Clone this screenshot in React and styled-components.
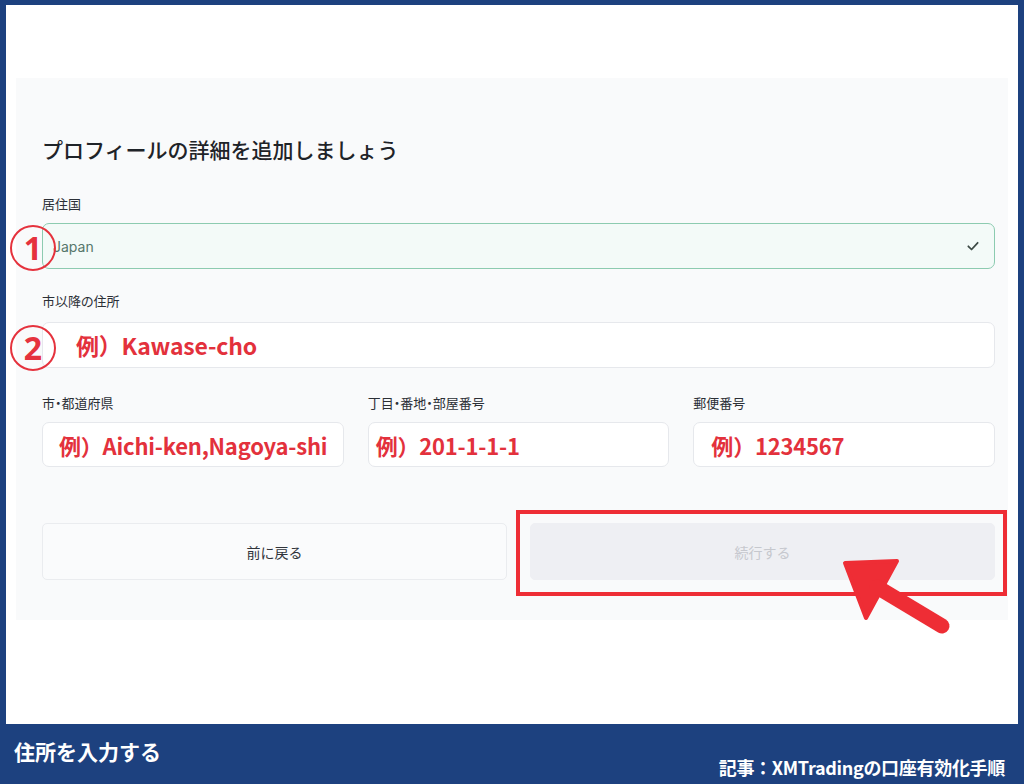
import React from "react";
import styled, { createGlobalStyle } from "styled-components";

const GlobalStyle = createGlobalStyle`
  html, body {
    margin: 0;
    padding: 0;
    background: #ffffff;
    font-family: "Noto Sans CJK JP", "Noto Sans", sans-serif;
  }
`;

// 外枠
const Frame = styled.div`
  width: 1024px;
  height: 784px;
  box-sizing: border-box;
  background: #1d417f;
  padding: 5px 6px 0 6px;
  display: flex;
  flex-direction: column;
`;

const Sheet = styled.div`
  flex: 1;
  background: #ffffff;
  padding: 73px 10px 0 10px;
`;

const Panel = styled.div`
  position: relative;
  height: 542px;
  box-sizing: border-box;
  background: #f9fafb;
  padding: 56px 13px 0 26px;
`;

const Title = styled.h1`
  margin: 0 0 31px 0;
  font-size: 21px;
  line-height: 30px;
  font-weight: 500;
  color: #1f2328;
`;

const Label = styled.div`
  font-size: 13px;
  line-height: 18px;
  color: #2b2f36;
  font-feature-settings: "palt";
  margin-bottom: ${props => props.gap || "10px"};
`;

const Field = styled.div`
  position: relative;
  margin-bottom: ${props => props.after || "0"};
`;

const Input = styled.div`
  height: ${props => props.height || "46px"};
  box-sizing: border-box;
  border-radius: 7px;
  border: 1px solid ${props => (props.ok ? "#8ccbb0" : "#e6e8ec")};
  background: ${props => (props.ok ? "#f3faf8" : "#ffffff")};
  display: flex;
  align-items: center;
  justify-content: space-between;
  padding: 0 14px 0 ${props => props.pad || "14px"};
`;

const InputValue = styled.span`
  font-family: "Inter", "Noto Sans", sans-serif;
  font-size: 14px;
  color: #55766b;
`;

const Example = styled.span`
  font-family: "Noto Sans CJK JP", "Noto Sans", sans-serif;
  font-weight: 700;
  font-size: ${props => props.size || "22px"};
  color: #e3313c;
  white-space: nowrap;
  letter-spacing: -0.2px;
`;

const Grid = styled.div`
  display: grid;
  grid-template-columns: 1fr 1fr 1fr;
  column-gap: 24px;
`;

const ButtonRow = styled.div`
  display: grid;
  grid-template-columns: 1fr 1fr;
  column-gap: 23px;
  margin-top: 56px;
`;

const Button = styled.div`
  height: 57px;
  box-sizing: border-box;
  border-radius: 5px;
  display: flex;
  align-items: center;
  justify-content: center;
  font-size: 14px;
  color: ${props => (props.disabled ? "#c6c8ce" : "#30343b")};
  background: ${props => (props.disabled ? "#eeeff3" : "#fafbfc")};
  border: 1px solid ${props => (props.disabled ? "#eeeff3" : "#eaecef")};
`;

const Marker = styled.div`
  position: absolute;
  left: ${props => props.left};
  top: ${props => props.top};
  width: 46px;
  height: 46px;
  border-radius: 50%;
  border: 2px solid #e5323d;
  box-sizing: border-box;
  display: flex;
  align-items: center;
  justify-content: center;
  color: #e5323d;
  font-weight: 700;
  font-size: 32px;
  line-height: 1;
  font-family: "Noto Sans", sans-serif;
`;

const Highlight = styled.div`
  position: absolute;
  left: 500px;
  top: 432px;
  width: 491px;
  height: 86px;
  box-sizing: border-box;
  border: 4px solid #ee2d35;
`;

const Arrow = styled.svg`
  position: absolute;
  left: 819px;
  top: 475px;
`;

const Footer = styled.div`
  height: 60px;
  position: relative;
  padding: 0 8px;
  color: #ffffff;
`;

const FooterTitle = styled.div`
  padding-top: 12px;
  font-size: 21px;
  font-weight: 700;
`;

const FooterNote = styled.div`
  position: absolute;
  right: 13px;
  bottom: 4px;
  font-size: 18px;
  font-weight: 700;
  letter-spacing: -0.3px;
`;

const Check = () => (
  <svg width="14" height="14" viewBox="0 0 24 24" fill="none" stroke="#3d4a46" strokeWidth="3" strokeLinecap="round" strokeLinejoin="round">
    <polyline points="4 12.5 9.5 18 20 6.5" />
  </svg>
);

export default function App() {
  return (
    <>
      <GlobalStyle />
      <Frame>
        <Sheet>
          <Panel>
            <Title>プロフィールの詳細を追加しましょう</Title>

            <Label>居住国</Label>
            <Field after="23px">
              <Input ok pad="10px">
                <InputValue>Japan</InputValue>
                <Check />
              </Input>
            </Field>

            <Label gap="12px">市以降の住所</Label>
            <Field after="26px">
              <Input pad="33px">
                <Example size="23px">例）Kawase-cho</Example>
              </Input>
            </Field>

            <Grid>
              <div>
                <Label>市・都道府県</Label>
                <Input height="45px" pad="16px">
                  <Example>例）Aichi-ken,Nagoya-shi</Example>
                </Input>
              </div>
              <div>
                <Label>丁目・番地・部屋番号</Label>
                <Input height="45px" pad="7px">
                  <Example>例）201-1-1-1</Example>
                </Input>
              </div>
              <div>
                <Label>郵便番号</Label>
                <Input height="45px" pad="17px">
                  <Example>例）1234567</Example>
                </Input>
              </div>
            </Grid>

            <ButtonRow>
              <Button>前に戻る</Button>
              <Button disabled>続行する</Button>
            </ButtonRow>

            <Marker left="-6px" top="147px">1</Marker>
            <Marker left="-6px" top="247px">2</Marker>
            <Highlight />
            <Arrow width="125" height="90" viewBox="0 0 125 90">
              <polygon points="10,10 62,8 31,65" fill="#ee2d35" strokeLinejoin="round" stroke="#ee2d35" strokeWidth="4" />
              <line x1="42" y1="34" x2="107" y2="73" stroke="#ee2d35" strokeWidth="15" strokeLinecap="round" />
            </Arrow>
          </Panel>
        </Sheet>
        <Footer>
          <FooterTitle>住所を入力する</FooterTitle>
          <FooterNote>記事：XMTradingの口座有効化手順</FooterNote>
        </Footer>
      </Frame>
    </>
  );
}
